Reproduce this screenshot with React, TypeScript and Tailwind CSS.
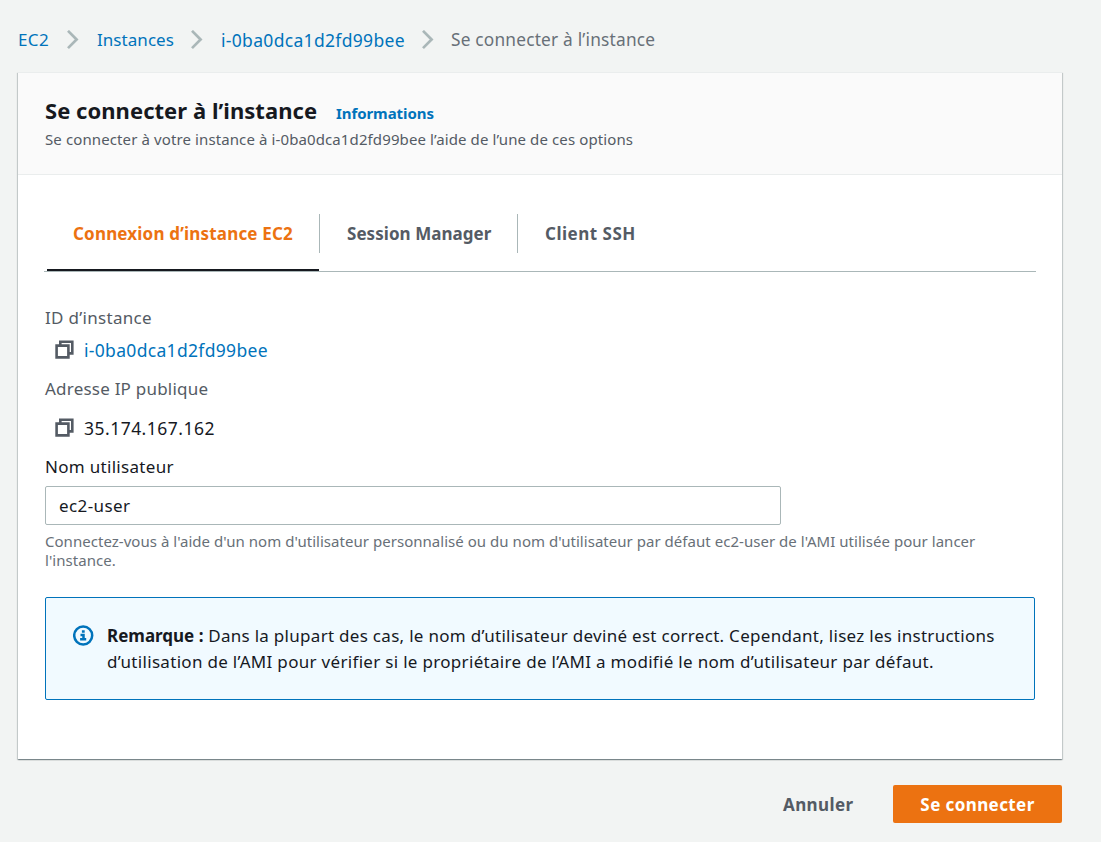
import React from 'react';

function Chevron() {
  return (
    <svg className="h-5 w-3 shrink-0" viewBox="0 0 12 20" fill="none" stroke="#aab7b8" strokeWidth="2.7">
      <path d="M1 0.9 L9.6 9.5 L1 18.1" />
    </svg>
  );
}

function CopyIcon() {
  return (
    <svg className="-mt-[2px] h-[19px] w-[19px] shrink-0" viewBox="0 0 19 19" fill="none" stroke="#545b64" strokeWidth="2.6">
      <path d="M5.3 5 V1.8 H17.3 V13.4 H14" />
      <path d="M1.6 5.6 H13.4 V17.4 H1.6 Z" />
    </svg>
  );
}

function InfoIcon() {
  return (
    <svg className="h-[21px] w-[21px] shrink-0" viewBox="0 0 21 21" fill="none" stroke="#0073bb" strokeWidth="2.5">
      <circle cx="10.2" cy="10.5" r="9" />
      <path d="M8.9 6.5 H11.7 M7.5 9.9 H10.5 V14.6 M7.1 14.3 H13.2" />
    </svg>
  );
}

export default function App() {
  return (
    <div className="h-[842px] w-[1101px] overflow-hidden bg-[#f2f4f3] pl-[18px] font-['Noto_Sans',sans-serif] text-[17px] text-[#16191f]">
      <nav className="flex h-[72px] items-center pt-2 whitespace-nowrap text-[#0073bb]">
        <a className="w-[49px] tracking-[0.4px]">EC2</a>
        <Chevron />
        <a className="ml-[18px] w-[94px] tracking-[0.05px]">Instances</a>
        <Chevron />
        <a className="ml-[18px] w-[201px] text-[17.5px] tracking-[0.32px]">i-0ba0dca1d2fd99bee</a>
        <Chevron />
        <span className="ml-[17px] text-[17.3px] tracking-[0.2px] text-[#687078]">Se connecter à l’instance</span>
      </nav>

      <main className="h-[687px] w-[1044px] bg-white shadow-[0_1px_1px_0_rgba(0,28,36,0.3),1px_1px_1px_0_rgba(0,28,36,0.15),-1px_1px_1px_0_rgba(0,28,36,0.15)]">
        <header className="h-[103px] border-t border-b border-[#eaeded] bg-[#fafafa] pt-[21px] pl-[27px] whitespace-nowrap">
          <div className="flex items-baseline leading-[32px]">
            <h1 className="w-[291px] text-[22px] font-bold tracking-[0.04px]">Se connecter à l’instance</h1>
            <a className="text-[15px] font-bold tracking-[-0.07px] text-[#0073bb]">Informations</a>
          </div>
          <p className="-mt-[2px] text-[15px] leading-6 tracking-[0.11px] text-[#545b64]">
            Se connecter à votre instance à i-0ba0dca1d2fd99bee l’aide de l’une de ces options
          </p>
        </header>

        <div className="px-[27px]">
          <div className="-mr-px -ml-px flex h-[97px] border-b border-[#aab7b8] pt-[39px] pl-[3px] leading-[39px] font-bold whitespace-nowrap text-[#545b64]">
            <div className="h-[57px] w-[272px] border-b-2 border-[#16191f] pl-[26px] tracking-[0.18px] text-[#ec7211]">
              Connexion d’instance EC2
            </div>
            <div className="h-[39px] w-[199px] border-r border-l border-[#aab7b8] pl-[27px] tracking-[0.05px]">Session Manager</div>
            <div className="h-[39px] pl-[27px] tracking-[0.5px]">Client SSH</div>
          </div>

          <section className="whitespace-nowrap">
            <div className="mt-[34px] h-6 leading-6 tracking-[0.3px] text-[#545b64]">ID d’instance</div>
            <div className="mt-2 flex h-6 items-center pl-[10px] leading-6">
              <CopyIcon />
              <a className="ml-[10px] text-[17.5px] tracking-[0.32px] text-[#0073bb]">i-0ba0dca1d2fd99bee</a>
            </div>
            <div className="mt-[15px] h-6 leading-6 tracking-[0.22px] text-[#545b64]">Adresse IP publique</div>
            <div className="mt-[15px] flex h-6 items-center pl-[10px] leading-6">
              <CopyIcon />
              <span className="ml-[10px] text-[17.5px] tracking-[0.48px]">35.174.167.162</span>
            </div>
            <label className="mt-[15px] block h-6 leading-6 tracking-[0.3px]">Nom utilisateur</label>
            <div className="mt-[7px] flex h-[39px] w-[736px] items-center rounded-xs border border-[#aab7b8] bg-white pl-[13px] tracking-[0.4px]">
              ec2-user
            </div>
            <p className="mt-[7px] text-[15px] leading-[19px] tracking-[0.033px] text-[#687078]">
              Connectez-vous à l'aide d'un nom d'utilisateur personnalisé ou du nom d'utilisateur par défaut ec2-user de l'AMI utilisée pour lancer
              <br />
              l'instance.
            </p>
          </section>

          <div className="mt-[27px] flex h-[103px] w-[990px] rounded-xs border border-[#0073bb] bg-[#f1faff] pt-[25px] pl-[27px] leading-[26px] whitespace-nowrap">
            <div className="mr-[13px] pt-[2px]"><InfoIcon /></div>
            <p className="tracking-[0.29px]">
              <b className="tracking-normal">Remarque :</b> Dans la plupart des cas, le nom d’utilisateur deviné est correct. Cependant, lisez les instructions
              <br />
              <span className="tracking-[0.31px]">d’utilisation de l’AMI pour vérifier si le propriétaire de l’AMI a modifié le nom d’utilisateur par défaut.</span>
            </p>
          </div>
        </div>
      </main>

      <footer className="mt-[26px] flex h-[38px] w-[1044px] items-center justify-end font-bold whitespace-nowrap">
        <button className="w-[110px] pt-[2px] text-left tracking-[0.4px] text-[#545b64]">Annuler</button>
        <button className="h-[38px] w-[169px] rounded-xs bg-[#ec7211] pt-[2px] text-center tracking-[0.4px] text-white">Se connecter</button>
      </footer>
    </div>
  );
}
